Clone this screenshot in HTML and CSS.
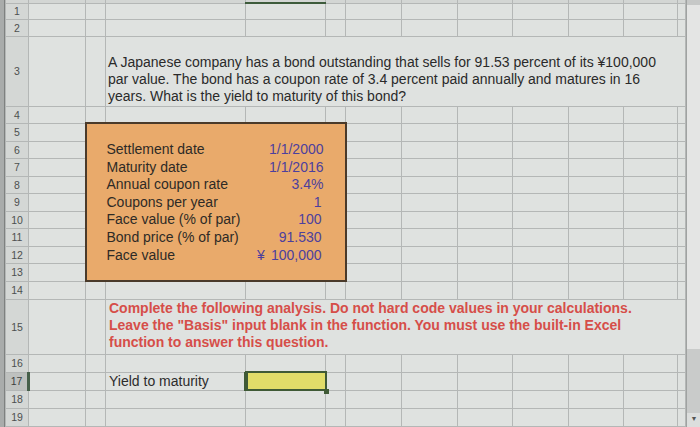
FILE: index.html
```html
<!DOCTYPE html>
<html>
<head>
<meta charset="utf-8">
<link rel="stylesheet" href="styles.css">
</head>
<body>
<div class="screen">
  <div class="main">
    <div class="edge"></div>
    <table class="sheet">
      <colgroup>
        <col class="c-hdr"><col class="c-a"><col class="c-b"><col class="c-c"><col class="c-d"><col class="c-e">
        <col class="c-f"><col class="c-g"><col class="c-h"><col class="c-i"><col class="c-j"><col class="c-k"><col class="c-l">
      </colgroup>
      <tr class="r-top">
        <th class="rh"></th><td></td><td></td><td></td><td class="col-sel"></td><td></td><td></td><td></td><td></td><td></td><td></td><td></td><td></td>
      </tr>
      <tr class="r16"><th class="rh">1</th><td></td><td></td><td></td><td></td><td></td><td></td><td></td><td></td><td></td><td></td><td></td><td></td></tr>
      <tr class="r17"><th class="rh">2</th><td></td><td></td><td></td><td></td><td></td><td></td><td></td><td></td><td></td><td></td><td></td><td></td></tr>
      <tr class="r-q">
        <th class="rh">3</th><td></td><td></td>
        <td colspan="10" class="question">A Japanese company has a bond outstanding that sells for 91.53 percent of its ¥100,000<br>par value. The bond has a coupon rate of 3.4 percent paid annually and matures in 16<br>years. What is the yield to maturity of this bond?</td>
      </tr>
      <tr class="r17"><th class="rh">4</th><td></td><td></td><td></td><td></td><td></td><td></td><td></td><td></td><td></td><td></td><td></td><td></td></tr>
      <tr class="r18">
        <th class="rh">5</th><td></td>
        <td colspan="4" rowspan="9" class="box-cell">
          <div class="box">
            <span class="lbl">Settlement date</span><span class="val">1/1/2000</span>
            <span class="lbl">Maturity date</span><span class="val">1/1/2016</span>
            <span class="lbl">Annual coupon rate</span><span class="val">3.4%</span>
            <span class="lbl">Coupons per year</span><span class="val pad">1</span>
            <span class="lbl">Face value (% of par)</span><span class="val pad">100</span>
            <span class="lbl">Bond price (% of par)</span><span class="val pad">91.530</span>
            <span class="lbl">Face value</span><span class="val pad yen"><span>¥</span><span>100,000</span></span>
          </div>
        </td>
        <td></td><td></td><td></td><td></td><td></td><td></td><td></td>
      </tr>
      <tr class="r17"><th class="rh">6</th><td></td><td></td><td></td><td></td><td></td><td></td><td></td><td></td></tr>
      <tr class="r18"><th class="rh">7</th><td></td><td></td><td></td><td></td><td></td><td></td><td></td><td></td></tr>
      <tr class="r17"><th class="rh">8</th><td></td><td></td><td></td><td></td><td></td><td></td><td></td><td></td></tr>
      <tr class="r18"><th class="rh">9</th><td></td><td></td><td></td><td></td><td></td><td></td><td></td><td></td></tr>
      <tr class="r17"><th class="rh">10</th><td></td><td></td><td></td><td></td><td></td><td></td><td></td><td></td></tr>
      <tr class="r18"><th class="rh">11</th><td></td><td></td><td></td><td></td><td></td><td></td><td></td><td></td></tr>
      <tr class="r17"><th class="rh">12</th><td></td><td></td><td></td><td></td><td></td><td></td><td></td><td></td></tr>
      <tr class="r18"><th class="rh">13</th><td></td><td></td><td></td><td></td><td></td><td></td><td></td><td></td></tr>
      <tr class="r18"><th class="rh">14</th><td></td><td></td><td></td><td></td><td></td><td></td><td></td><td></td><td></td><td></td><td></td><td></td></tr>
      <tr class="r-note">
        <th class="rh">15</th><td></td><td></td>
        <td colspan="10" class="note">Complete the following analysis. Do not hard code values in your calculations.<br>Leave the "Basis" input blank in the function. You must use the built-in Excel<br>function to answer this question.</td>
      </tr>
      <tr class="r18"><th class="rh">16</th><td></td><td></td><td></td><td></td><td></td><td></td><td></td><td></td><td></td><td></td><td></td><td></td></tr>
      <tr class="r18"><th class="rh rh-sel">17</th><td></td><td></td><td class="text">Yield to maturity</td><td class="selected"></td><td></td><td></td><td></td><td></td><td></td><td></td><td></td><td></td></tr>
      <tr class="r18"><th class="rh">18</th><td></td><td></td><td></td><td></td><td></td><td></td><td></td><td></td><td></td><td></td><td></td><td></td></tr>
      <tr class="r18"><th class="rh">19</th><td></td><td></td><td></td><td></td><td></td><td></td><td></td><td></td><td></td><td></td><td></td><td></td></tr>
    </table>
    <div class="scrollbar">
      <div class="track"></div>
      <div class="thumb"></div>
      <div class="arrow">▼</div>
    </div>
  </div>
  <div class="bottom"></div>
</div>
</body>
</html>
```

FILE: styles.css
```css
html, body {
  margin: 0;
  padding: 0;
  background: #dcdfdd;
}
.screen {
  width: 700px;
  height: 427px;
  overflow: hidden;
  display: flex;
  flex-direction: column;
  font-family: "Liberation Sans", Arial, sans-serif;
}
.main {
  display: flex;
  flex: 0 0 auto;
}
.edge {
  width: 5px;
  flex: 0 0 5px;
  background: #a9acab;
  border-right: 1px solid #7e8180;
  box-sizing: border-box;
}
.sheet {
  border-collapse: collapse;
  table-layout: fixed;
  width: 680px;
  background: #dfe2e0;
}
.c-hdr { width: 23px; }
.c-a { width: 57px; }
.c-b { width: 20px; }
.c-c { width: 140px; }
.c-d { width: 80px; }
.c-e { width: 20px; }
.c-f { width: 56px; }
.c-g { width: 56px; }
.c-h { width: 55px; }
.c-i { width: 56px; }
.c-j { width: 55px; }
.c-k { width: 54px; }
.c-l { width: 8px; }

.sheet td, .sheet th {
  border: 1px solid #b4b7b6;
  padding: 0;
  overflow: visible;
  white-space: nowrap;
}
.r-top { height: 3px; }
.r-top td, .r-top th { background: #d3d6d4; border-top: none; }
.r-top td.col-sel { border-bottom: 2px solid #3d5b3b; }
.r16 { height: 16px; }
.r17 { height: 17px; }
.r18 { height: 18px; }
.r-q { height: 70px; }
.r-note { height: 53px; }

.rh {
  background: #d4d7d5;
  color: #4d504f;
  font-weight: normal;
  font-size: 10.5px;
  text-align: center;
  vertical-align: middle;
  line-height: 10px;
}
.rh-sel {
  background: #bec1bf;
  color: #3c3f3e;
  border-right: 3px solid #46604a !important;
}

.question {
  vertical-align: bottom;
  font-size: 14px;
  line-height: 17px;
  color: #2a2a2a;
  padding: 0 0 1px 2px !important;
}
.note {
  vertical-align: bottom;
  font-size: 14px;
  font-weight: bold;
  line-height: 17px;
  color: #d64e49;
  padding: 0 0 3px 3px !important;
}
.text {
  font-size: 14px;
  color: #2c2c2c;
  padding-left: 3px !important;
  vertical-align: middle;
}

.box-cell {
  background: #e9aa6b;
  border: 2px solid #4a3a2a !important;
  vertical-align: top;
}
.box {
  display: grid;
  grid-template-columns: 1fr auto;
  padding: 17px 21px 0 20px;
  font-size: 14px;
  line-height: 17.6px;
}
.lbl { color: #2e2a26; }
.val {
  color: #4c3f9e;
  text-align: right;
}
.val.pad { padding-right: 2px; }
.yen {
  display: flex;
  gap: 6px;
  justify-content: flex-end;
}

.selected {
  position: relative;
  background: #e1dd69;
  outline: 2px solid #3f5a36;
  outline-offset: -1px;
  border-left: 4px solid #3f5a36 !important;
}
.selected::after {
  content: "";
  position: absolute;
  right: -4px;
  bottom: -4px;
  width: 5px;
  height: 5px;
  background: #3f5a36;
}

.scrollbar {
  width: 15px;
  flex: 0 0 15px;
  display: flex;
  flex-direction: column;
  background: #e3e4e3;
  border-left: 1px solid #9fa2a1;
  box-sizing: border-box;
}
.track { flex: 0 0 344px; background: #e4e5e4; border-top: 5px solid #c6c8c7; }
.thumb { flex: 0 0 64px; background: #c9cbca; }
.arrow {
  flex: 1;
  font-size: 7px;
  line-height: 12px;
  color: #555;
  text-align: center;
  background: #dcdedd;
}
.bottom {
  flex: 1;
  background: #cfd1d0;
  border-top: 1px solid #9ea1a0;
}
```
